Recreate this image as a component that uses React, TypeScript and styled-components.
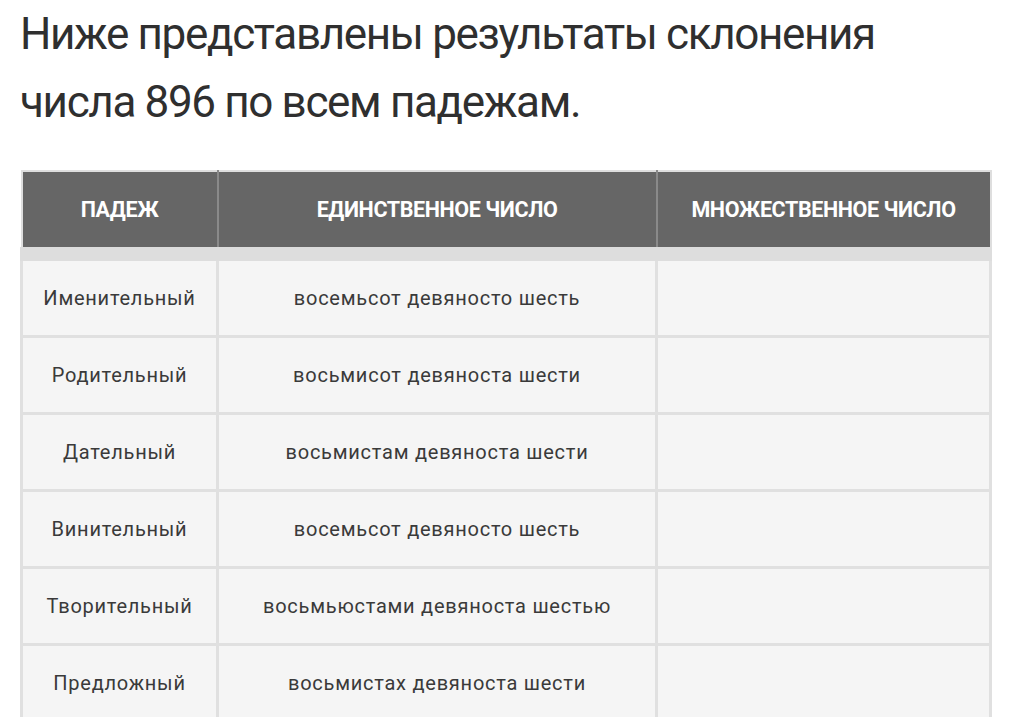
import React from "react";
import styled, { createGlobalStyle } from "styled-components";

const Global = createGlobalStyle`
  html, body { margin: 0; padding: 0; background: #ffffff; }
  body { font-family: Roboto, "Noto Sans", sans-serif; color: #333; }
`;

const Page = styled.div`
  padding: 0 20px 0 20px;
`;

const Heading = styled.p`
  margin: 0;
  font-size: 44px;
  line-height: 68px;
  font-weight: 400;
  letter-spacing: -1.35px;
  color: #2f2f2f;
`;

const Table = styled.table`
  margin-top: 34px;
  width: 969px;
  border-collapse: collapse;
  table-layout: fixed;
  border: 2px solid #dedede;
`;

const HeadCell = styled.th`
  background: #666666;
  color: #ffffff;
  height: 75px;
  font-size: 21.5px;
  font-weight: 700;
  letter-spacing: -0.4px;
  text-align: center;
  border-left: 2px solid #8a8a8a;
  border-bottom: 14px solid #dddddd;
  padding: 0;
  &:first-child { border-left: none; }
`;

const Cell = styled.td`
  background: #f5f5f5;
  height: 74px;
  padding: 0;
  text-align: center;
  font-size: 20px;
  letter-spacing: 0.75px;
  color: #3a3a3a;
  border: 3px solid #e0e0e0;
  border-top: none;
`;

const rows: [string, string][] = [
  ["Именительный", "восемьсот девяносто шесть"],
  ["Родительный", "восьмисот девяноста шести"],
  ["Дательный", "восьмистам девяноста шести"],
  ["Винительный", "восемьсот девяносто шесть"],
  ["Творительный", "восьмьюстами девяноста шестью"],
  ["Предложный", "восьмистах девяноста шести"],
];

export default function App() {
  return (
    <Page>
      <Global />
      <Heading>
        Ниже представлены результаты склонения числа 896 по всем падежам.
      </Heading>
      <Table>
        <colgroup>
          <col style={{ width: 196 }} />
          <col style={{ width: 439 }} />
          <col style={{ width: 334 }} />
        </colgroup>
        <thead>
          <tr>
            <HeadCell>ПАДЕЖ</HeadCell>
            <HeadCell>ЕДИНСТВЕННОЕ ЧИСЛО</HeadCell>
            <HeadCell>МНОЖЕСТВЕННОЕ ЧИСЛО</HeadCell>
          </tr>
        </thead>
        <tbody>
          {rows.map(([c, s]) => (
            <tr key={c}>
              <Cell>{c}</Cell>
              <Cell>{s}</Cell>
              <Cell />
            </tr>
          ))}
        </tbody>
      </Table>
    </Page>
  );
}
